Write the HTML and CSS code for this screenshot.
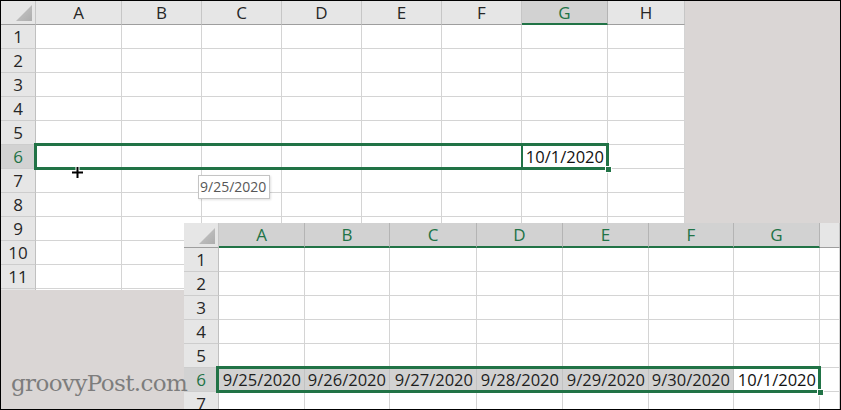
FILE: index.html
```html
<!DOCTYPE html>
<html>
<head>
<meta charset="utf-8">
<title>Fill series</title>
<link rel="stylesheet" href="styles.css">
</head>
<body>
<div class="frame">
  <div class="sheet sheet-top">
    <div class="hdr corner"><span class="tri"></span></div>
    <div class="hdr">A</div><div class="hdr">B</div><div class="hdr">C</div><div class="hdr">D</div><div class="hdr">E</div><div class="hdr">F</div><div class="hdr sel">G</div><div class="hdr">H</div>

    <div class="rh">1</div><div class="c"></div><div class="c"></div><div class="c"></div><div class="c"></div><div class="c"></div><div class="c"></div><div class="c"></div><div class="c"></div>
    <div class="rh">2</div><div class="c"></div><div class="c"></div><div class="c"></div><div class="c"></div><div class="c"></div><div class="c"></div><div class="c"></div><div class="c"></div>
    <div class="rh">3</div><div class="c"></div><div class="c"></div><div class="c"></div><div class="c"></div><div class="c"></div><div class="c"></div><div class="c"></div><div class="c"></div>
    <div class="rh">4</div><div class="c"></div><div class="c"></div><div class="c"></div><div class="c"></div><div class="c"></div><div class="c"></div><div class="c"></div><div class="c"></div>
    <div class="rh">5</div><div class="c"></div><div class="c"></div><div class="c"></div><div class="c"></div><div class="c"></div><div class="c"></div><div class="c"></div><div class="c"></div>
    <div class="rh sel">6</div><div class="c"></div><div class="c"></div><div class="c"></div><div class="c"></div><div class="c"></div><div class="c"></div><div class="c date">10/1/2020</div><div class="c"></div>
    <div class="rh">7</div><div class="c"></div><div class="c"></div><div class="c"></div><div class="c"></div><div class="c"></div><div class="c"></div><div class="c"></div><div class="c"></div>
    <div class="rh">8</div><div class="c"></div><div class="c"></div><div class="c"></div><div class="c"></div><div class="c"></div><div class="c"></div><div class="c"></div><div class="c"></div>
    <div class="rh">9</div><div class="c"></div><div class="c"></div><div class="c"></div><div class="c"></div><div class="c"></div><div class="c"></div><div class="c"></div><div class="c"></div>
    <div class="rh">10</div><div class="c"></div><div class="c"></div><div class="c"></div><div class="c"></div><div class="c"></div><div class="c"></div><div class="c"></div><div class="c"></div>
    <div class="rh">11</div><div class="c"></div><div class="c"></div><div class="c"></div><div class="c"></div><div class="c"></div><div class="c"></div><div class="c"></div><div class="c"></div>
    <div class="rh"></div><div class="c"></div><div class="c"></div><div class="c"></div><div class="c"></div><div class="c"></div><div class="c"></div><div class="c"></div><div class="c"></div>

    <div class="selbox selbox-top"><span class="divider"></span><span class="handle"></span></div>
  </div>

  <div class="tooltip">9/25/2020</div>

  <svg class="cursor" width="15" height="15" viewBox="0 0 15 15" aria-hidden="true">
    <path d="M5.5 1h4v4.5H14v4H9.5V14h-4V9.5H1v-4h4.5z" fill="#fff"/>
    <path d="M6.5 2h2v4.5H13v2H8.5V13h-2V8.5H2v-2h4.5z" fill="#000"/>
  </svg>

  <div class="sheet sheet-bottom">
    <div class="hdr corner"><span class="tri"></span></div>
    <div class="hdr sel">A</div><div class="hdr sel">B</div><div class="hdr sel">C</div><div class="hdr sel">D</div><div class="hdr sel">E</div><div class="hdr sel">F</div><div class="hdr sel">G</div><div class="hdr"></div>

    <div class="rh">1</div><div class="c"></div><div class="c"></div><div class="c"></div><div class="c"></div><div class="c"></div><div class="c"></div><div class="c"></div><div class="c"></div>
    <div class="rh">2</div><div class="c"></div><div class="c"></div><div class="c"></div><div class="c"></div><div class="c"></div><div class="c"></div><div class="c"></div><div class="c"></div>
    <div class="rh">3</div><div class="c"></div><div class="c"></div><div class="c"></div><div class="c"></div><div class="c"></div><div class="c"></div><div class="c"></div><div class="c"></div>
    <div class="rh">4</div><div class="c"></div><div class="c"></div><div class="c"></div><div class="c"></div><div class="c"></div><div class="c"></div><div class="c"></div><div class="c"></div>
    <div class="rh">5</div><div class="c"></div><div class="c"></div><div class="c"></div><div class="c"></div><div class="c"></div><div class="c"></div><div class="c"></div><div class="c"></div>
    <div class="rh sel">6</div><div class="c date fill">9/25/2020</div><div class="c date fill">9/26/2020</div><div class="c date fill">9/27/2020</div><div class="c date fill">9/28/2020</div><div class="c date fill">9/29/2020</div><div class="c date fill">9/30/2020</div><div class="c date">10/1/2020</div><div class="c"></div>
    <div class="rh">7</div><div class="c"></div><div class="c"></div><div class="c"></div><div class="c"></div><div class="c"></div><div class="c"></div><div class="c"></div><div class="c"></div>

    <div class="selbox selbox-bottom"><span class="handle"></span></div>
  </div>

  <div class="mark">groovyPost.com</div>
</div>
</body>
</html>
```

FILE: styles.css
```css
* {
  box-sizing: border-box;
}

html, body {
  margin: 0;
  padding: 0;
  background: #ffffff;
}

.frame {
  position: relative;
  width: 841px;
  height: 410px;
  border: 1px solid #000;
  background: #dad6d5;
  overflow: hidden;
  font-family: "Open Sans", "Noto Sans", sans-serif;
  color: #262626;
}

.sheet {
  display: grid;
  background: #fff;
  overflow: hidden;
  position: relative;
}

.sheet-top {
  width: 684px;
  height: 289px;
  grid-template-columns: 35px 86px 80px 80px 80px 80px 80px 86px 77px;
  grid-template-rows: repeat(13, 24px);
}

.sheet-bottom {
  position: absolute;
  left: 183px;
  top: 222px;
  right: 0;
  bottom: 0;
  grid-template-columns: 35px 86px 85px 87px 86px 86px 85px 86px 1fr;
  grid-template-rows: 25px repeat(7, 24px);
}

.hdr {
  background: #e6e6e6;
  border-right: 1px solid #c6c6c6;
  border-bottom: 1px solid #9e9e9e;
  text-align: center;
  font-size: 17px;
  line-height: 23px;
  color: #262626;
}

.hdr.sel {
  background: #d2d2d2;
  color: #217346;
  border-right-color: #b4b4b4;
  border-bottom: 2px solid #217346;
}

.corner {
  position: relative;
}

.tri {
  position: absolute;
  right: 3px;
  bottom: 3px;
  width: 16px;
  height: 16px;
  background: linear-gradient(135deg, #c9c9c9, #adadad);
  clip-path: polygon(100% 0, 100% 100%, 0 100%);
}

.rh {
  background: #e6e6e6;
  border-right: 1px solid #c0c0c0;
  border-bottom: 1px solid #cdcdcd;
  text-align: center;
  font-size: 17px;
  line-height: 23px;
  color: #262626;
}

.rh.sel {
  background: #d2d2d2;
  color: #217346;
}

.c {
  border-right: 1px solid #d4d4d4;
  border-bottom: 1px solid #d4d4d4;
  background: #fff;
}

.date {
  font-size: 16.5px;
  line-height: 23px;
  text-align: right;
  padding-right: 3px;
  color: #111;
  white-space: nowrap;
}

.fill {
  background: #d2d2d2;
  border-right-color: #c2c2c2;
  color: #1e1e1e;
}

.selbox {
  position: absolute;
  border: 3px solid #217346;
  pointer-events: none;
}

.selbox-top {
  left: 33px;
  top: 142px;
  width: 575px;
  height: 27px;
}

.selbox-bottom {
  left: 32px;
  top: 143px;
  width: 605px;
  height: 27px;
}

.divider {
  position: absolute;
  left: 484px;
  top: 0;
  bottom: 0;
  width: 2px;
  background: #217346;
}

.handle {
  position: absolute;
  right: -6px;
  bottom: -6px;
  width: 7px;
  height: 7px;
  background: #217346;
  border: 1px solid #fff;
}

.tooltip {
  position: absolute;
  left: 197px;
  top: 174px;
  width: 72px;
  height: 24px;
  background: #fff;
  border: 1px solid #c4c4c4;
  box-shadow: 1px 1px 2px rgba(0, 0, 0, 0.12);
  font-size: 14px;
  line-height: 22px;
  padding-left: 1px;
  color: #575757;
  white-space: nowrap;
}

.cursor {
  position: absolute;
  left: 69px;
  top: 164px;
}

.mark {
  position: absolute;
  left: 10px;
  top: 369px;
  font-family: "DejaVu Serif", "Liberation Serif", serif;
  font-size: 23px;
  line-height: 27px;
  letter-spacing: -0.6px;
  color: #7d7d7d;
  white-space: nowrap;
}
```
